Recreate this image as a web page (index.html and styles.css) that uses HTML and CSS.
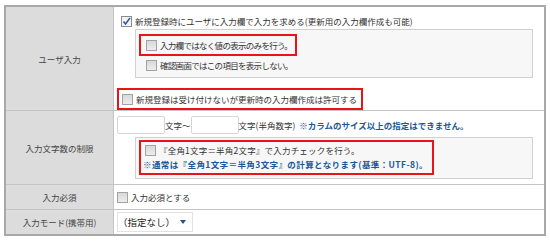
FILE: index.html
```html
<!DOCTYPE html>
<html lang="ja">
<head>
  <meta charset="UTF-8">
  <title>項目設定</title>
  <link rel="stylesheet" href="styles.css">
</head>
<body>
  <table class="form-table">
    <tr class="row-user">
      <th>ユーザ入力</th>
      <td>
        <div class="opt first-line">
          <span class="cb checked">
            <svg width="9" height="9" viewBox="0 0 9 9"><path d="M1.5 4.5 L3.5 7 L8 1" fill="none" stroke="#2a5caa" stroke-width="1.6"/></svg>
          </span>
          <span>新規登録時にユーザに入力欄で入力を求める(更新用の入力欄作成も可能)</span>
        </div>
        <div class="sub-box user-box">
          <div class="mark mark-view">
            <div class="opt tight"><span class="cb"></span><span>入力欄ではなく値の表示のみを行う。</span></div>
          </div>
          <div class="opt tight confirm-line"><span class="cb"></span><span>確認画面ではこの項目を表示しない。</span></div>
        </div>
        <div class="mark mark-update">
          <div class="opt"><span class="cb"></span><span>新規登録は受け付けないが更新時の入力欄作成は許可する</span></div>
        </div>
      </td>
    </tr>
    <tr class="row-length">
      <th>入力文字数の制限</th>
      <td>
        <div class="length-line">
          <input type="text" class="num-input">
          <span>文字〜</span>
          <input type="text" class="num-input">
          <span>文字(半角数字)</span>
          <span class="note">※カラムのサイズ以上の指定はできません。</span>
        </div>
        <div class="sub-box length-box">
          <div class="mark mark-width">
            <div class="opt"><span class="cb"></span><span>『全角1文字＝半角2文字』で入力チェックを行う。</span></div>
            <div class="note note-line">※通常は『全角1文字＝半角3文字』の計算となります(基準：UTF-8)。</div>
          </div>
        </div>
      </td>
    </tr>
    <tr class="row-required">
      <th>入力必須</th>
      <td>
        <div class="opt"><span class="cb"></span><span>入力必須とする</span></div>
      </td>
    </tr>
    <tr class="row-mode">
      <th>入力モード(携帯用)</th>
      <td>
        <div class="select-box">
          <span>（指定なし）</span>
          <span class="arrow"></span>
        </div>
      </td>
    </tr>
  </table>
</body>
</html>
```

FILE: styles.css
```css
body {
  margin: 0;
  padding: 5px 0 0 4px;
  font-family: "Noto Sans CJK JP", sans-serif;
  font-size: 8.5px;
  color: #333;
  background-color: #fff;
}

.form-table {
  width: 542px;
  border: 2px solid #a8a8a8;
  border-spacing: 0;
}

.form-table th {
  width: 107px;
  padding: 0;
  background-color: #dcdcdc;
  border-right: 1px solid #c4c4c4;
  border-bottom: 1px solid #c4c4c4;
  font-weight: normal;
  color: #444;
  text-align: center;
  vertical-align: middle;
}

.form-table td {
  padding: 0 11px 0 3px;
  border-bottom: 1px solid #c4c4c4;
  vertical-align: top;
}

.form-table tr:last-child th,
.form-table tr:last-child td {
  border-bottom: none;
}

.row-user td {
  height: 103px;
}

.row-length td {
  height: 73px;
}

.row-required td,
.row-mode td {
  height: 24px;
  vertical-align: middle;
}

.opt {
  display: flex;
  align-items: center;
  gap: 3px;
  height: 14px;
  white-space: nowrap;
}

.opt.tight span + span {
  letter-spacing: -0.7px;
}

.cb {
  display: inline-block;
  width: 11px;
  height: 11px;
  box-sizing: border-box;
  border: 1px solid #a3a3a3;
  background: linear-gradient(#d8d8d8, #ececec);
  flex-shrink: 0;
}

.cb.checked {
  background: #f4f4f4;
  border-color: #8c8c8c;
}

.cb.checked svg {
  display: block;
}

.first-line {
  margin-top: 7px;
  padding-left: 4px;
}

.sub-box {
  margin-left: 18px;
  border: 1px solid #d0d0d0;
  background-color: #f7f7f7;
}

.user-box {
  margin-top: 1px;
  height: 49px;
  box-sizing: border-box;
  padding: 4px 0 0 3px;
}

.mark {
  display: inline-block;
  box-sizing: border-box;
  border: 2px solid #e8141a;
}

.mark-view {
  height: 22px;
  padding: 2px 3px 0 5px;
}

.confirm-line {
  margin-top: 2px;
  padding-left: 7px;
}

.mark-update {
  margin-top: 10px;
  height: 22px;
  padding: 2px 4px 0 3px;
}

.length-line {
  display: flex;
  align-items: center;
  margin-top: 5px;
  height: 18px;
  white-space: nowrap;
}

.num-input {
  width: 48px;
  height: 18px;
  box-sizing: border-box;
  margin: 0;
  padding: 0;
  border: 1px solid #d6d6d6;
  border-radius: 2px;
  background-color: #fff;
}

.length-line .note {
  margin-left: 4px;
}

.note {
  color: #18599a;
  font-weight: bold;
}

.length-box {
  margin-top: 3px;
  height: 42px;
  box-sizing: border-box;
  padding: 2px 0 0 3px;
}

.mark-width {
  height: 35px;
  padding: 1px 4px 0 2px;
}

.mark-width .opt {
  padding-left: 2px;
  letter-spacing: 0.2px;
}

.note-line {
  height: 14px;
  line-height: 14px;
  white-space: nowrap;
  letter-spacing: 0.4px;
}

.select-box {
  display: flex;
  align-items: center;
  justify-content: space-between;
  width: 76px;
  height: 20px;
  box-sizing: border-box;
  padding: 0 6px 0 0;
  border: 1px solid #e2e2e2;
  background-color: #fff;
  font-size: 9.5px;
  color: #222;
}

.arrow {
  width: 0;
  height: 0;
  border-left: 3px solid transparent;
  border-right: 3px solid transparent;
  border-top: 4px solid #2b4c7e;
}
```
